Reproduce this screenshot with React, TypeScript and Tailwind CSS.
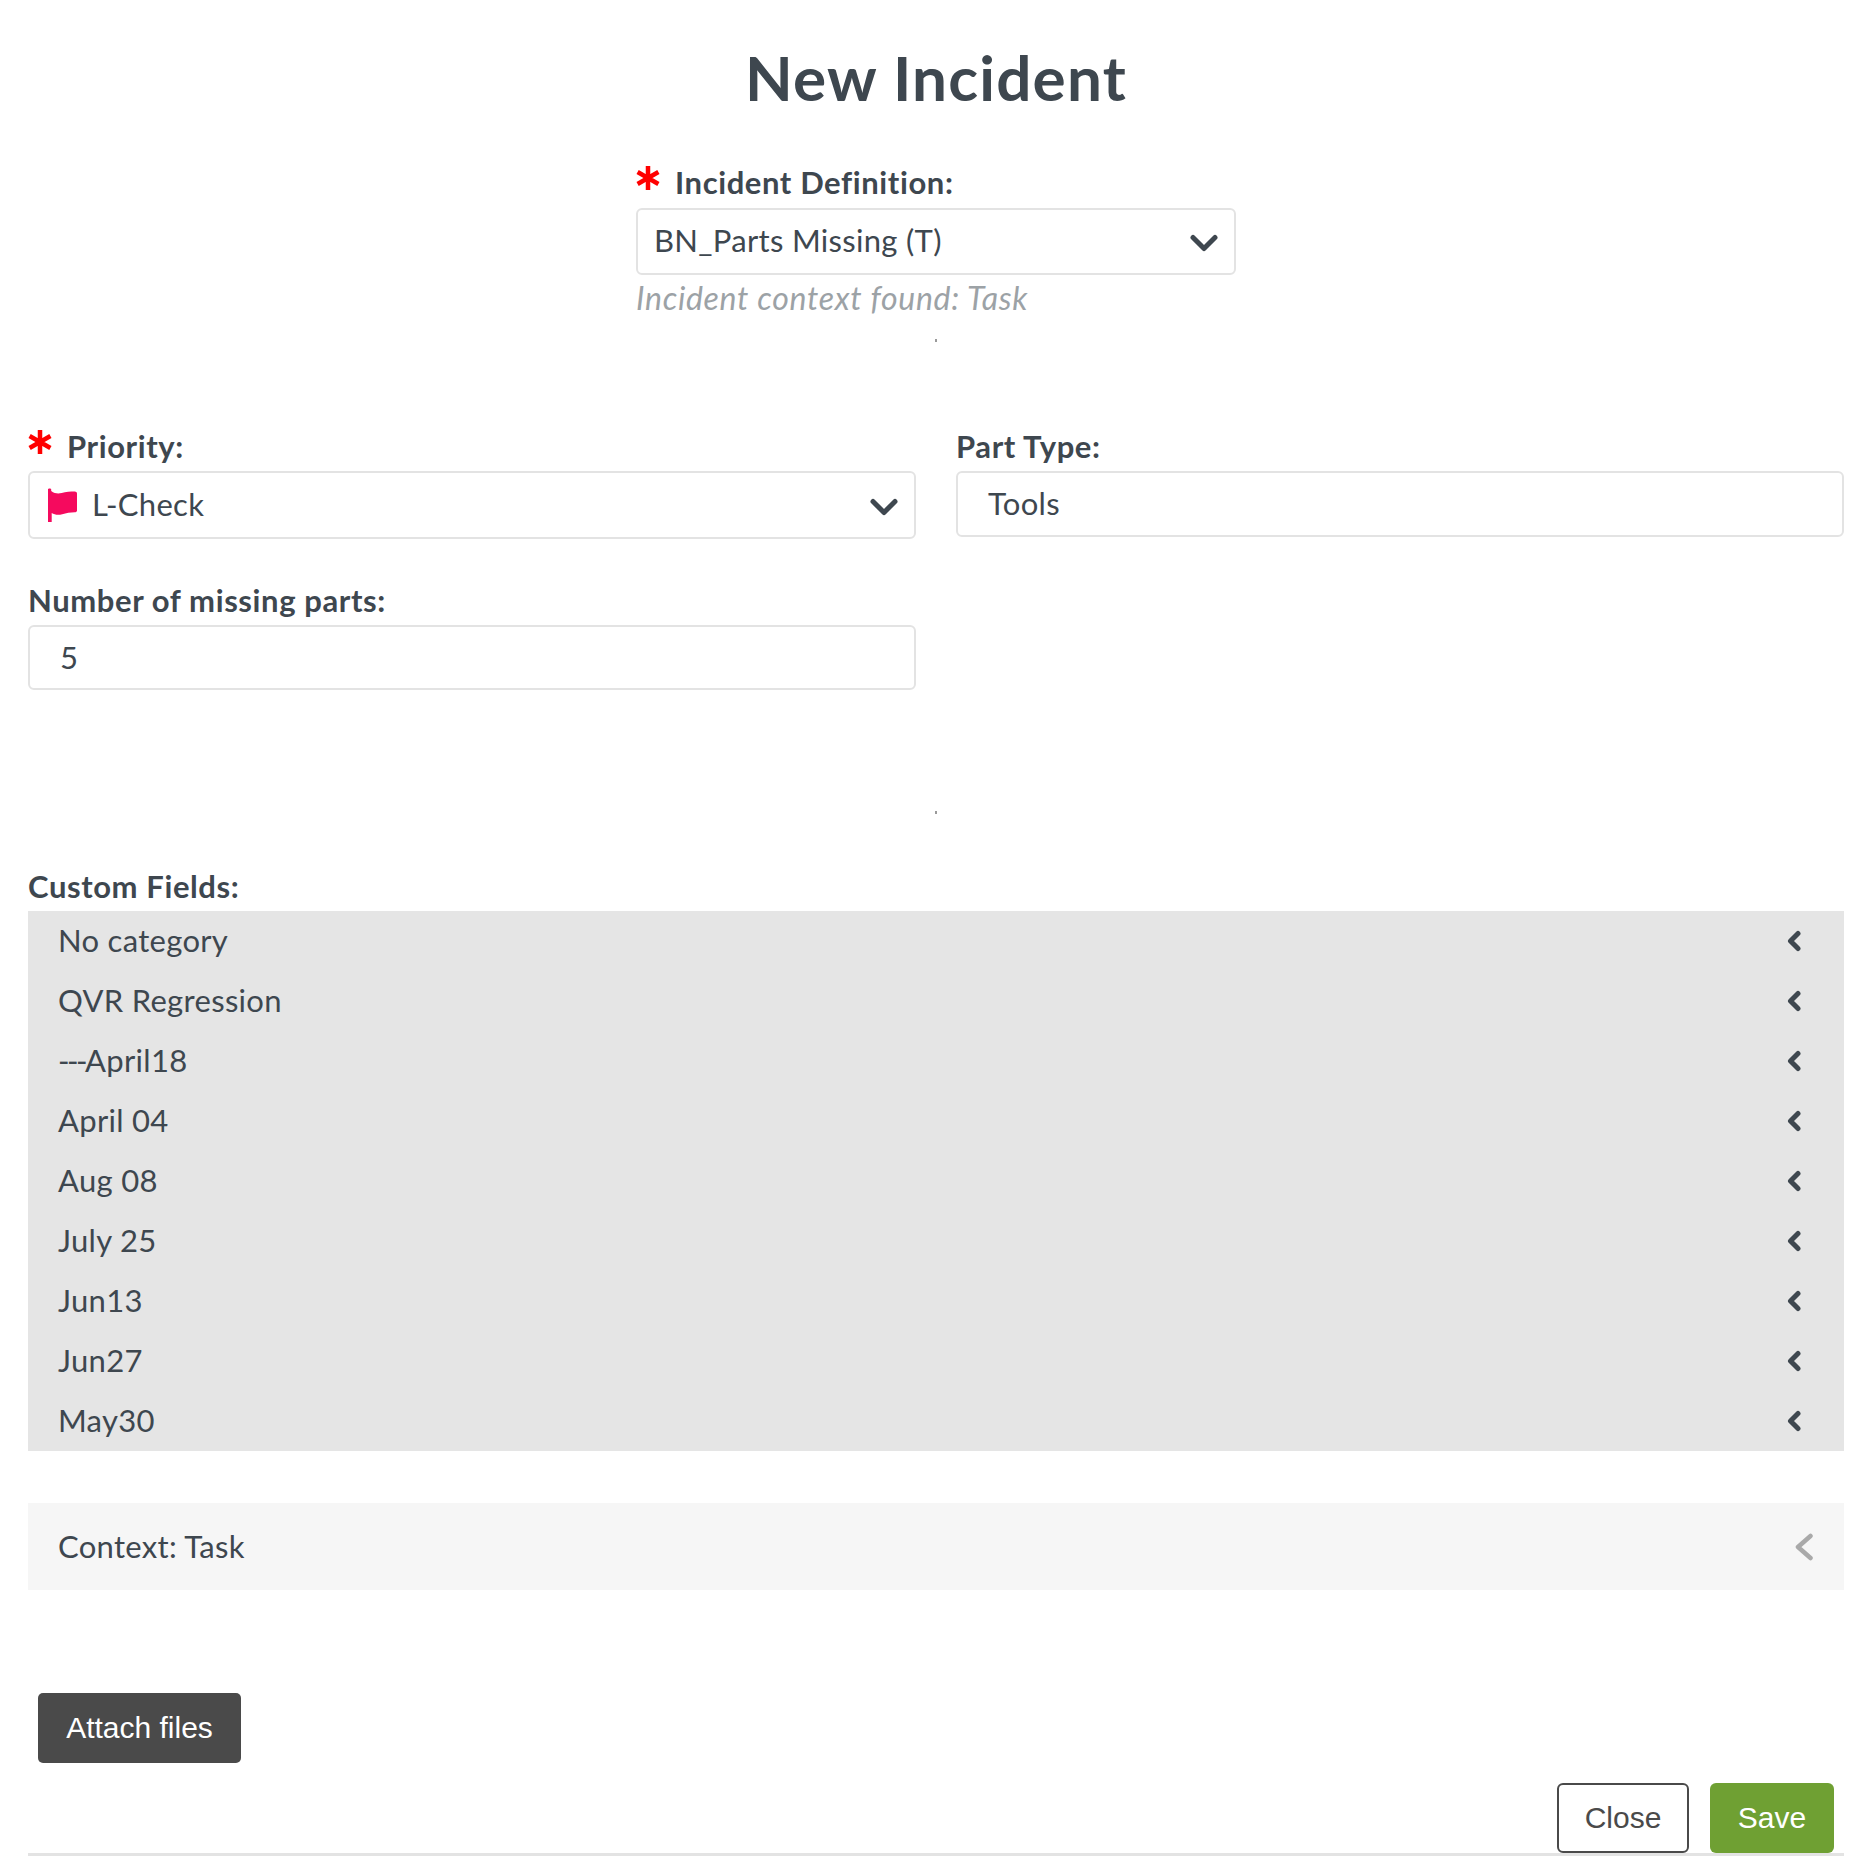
const categories = [
  'No category',
  'QVR Regression',
  '---April18',
  'April 04',
  'Aug 08',
  'July 25',
  'Jun13',
  'Jun27',
  'May30',
];

function Star({ className }: { className: string }) {
  return (
    <svg viewBox="0 0 24 24" className={className} fill="none" stroke="#ff0000" strokeWidth="4.5">
      <path d="M12 0v24M1.6 6l20.8 12M1.6 18L22.4 6" />
    </svg>
  );
}

function ChevronDown() {
  return (
    <svg viewBox="0 0 28 18" className="w-[28px] h-[18px] mt-[3px]" fill="none" stroke="#3e474f" strokeWidth="5" strokeLinecap="round" strokeLinejoin="round">
      <path d="M3 3.5l11 11 11-11" />
    </svg>
  );
}

function ChevronLeft({ light }: { light?: boolean }) {
  if (light) {
    return (
      <svg viewBox="0 0 20 28" className="w-[20px] h-[28px]" fill="none" stroke="#a9a9a9" strokeWidth="4.5" strokeLinecap="round" strokeLinejoin="round">
        <path d="M16.5 3L4 14l12.5 11" />
      </svg>
    );
  }
  return (
    <svg viewBox="0 0 16 22" className="w-[16px] h-[22px]" fill="none" stroke="#3e474f" strokeWidth="5" strokeLinecap="round" strokeLinejoin="round">
      <path d="M12 3.5L4.5 11l7.5 7.5" />
    </svg>
  );
}

function Flag() {
  return (
    <svg viewBox="0 0 32 34" className="w-[32px] h-[34px]">
      <path
        fill="#f50a5e"
        d="M1 1.5c0-1.4 3.2-1.4 3.2 0V3c3.5 2.6 7 3 10.5 2 4-1.1 9-1.5 13-1.5 1.4 0 2.3.8 2.3 2v17c0 1.2-.9 1.8-2.3 1.8-4.2 0-8.5.9-12.5 2-4 1-7.5.6-10.5-1.2V34H1z"
      />
    </svg>
  );
}

function Label({ text, required }: { text: string; required?: boolean }) {
  return (
    <div className="flex items-center h-[36px] text-[31px] tracking-[0.6px] font-bold text-[#3e474f]">
      {required && <Star className="w-[24px] h-[24px] mr-[15px] -mt-[8px]" />}
      <span>{text}</span>
    </div>
  );
}

export default function App() {
  return (
    <div className="w-[1856px] h-[1856px] overflow-hidden bg-white pl-[28px] pr-[12px] text-[#3e474f] font-['Lato','Liberation_Sans',sans-serif]">
      <h1 className="pt-[41px] h-[114px] leading-[72px] text-center text-[62px] tracking-[1.2px] font-bold">New Incident</h1>

      <div className="w-[600px] mx-auto mt-[50px]">
        <Label text="Incident Definition:" required />
        <div className="mt-[8px] h-[67px] flex items-center justify-between border-2 border-[#e3e3e3] rounded-[6px] pl-[16px] pr-[16px] text-[31px] tracking-[0.3px]">
          <span className="pb-[2px]">BN_Parts Missing (T)</span>
          <ChevronDown />
        </div>
        <div className="mt-[6px] leading-[34px] text-[32px] tracking-[0.7px] italic text-[#9ca2a6]">Incident context found: Task</div>
      </div>
      <div className="w-[2px] h-[3px] bg-[#9a9a9a] mx-auto mt-[24px]" />

      <div className="grid grid-cols-2 gap-x-[40px] mt-[86px]">
        <div>
          <Label text="Priority:" required />
          <div className="mt-[7px] h-[68px] flex items-center justify-between border-2 border-[#e3e3e3] rounded-[6px] pl-[17px] pr-[16px] text-[31px] tracking-[0.3px]">
            <div className="flex items-center gap-[13px]">
              <Flag />
              <span className="pb-[2px]">L-Check</span>
            </div>
            <ChevronDown />
          </div>
        </div>
        <div>
          <Label text="Part Type:" />
          <div className="mt-[7px] h-[66px] flex items-center border-2 border-[#e3e3e3] rounded-[6px] pl-[30px] pb-[2px] text-[31px] tracking-[0.3px]">
            Tools
          </div>
        </div>
        <div className="mt-[43px]">
          <Label text="Number of missing parts:" />
          <div className="mt-[7px] h-[65px] flex items-center border-2 border-[#e3e3e3] rounded-[6px] pl-[30px] pb-[1px] text-[31px]">
            5
          </div>
        </div>
      </div>
      <div className="w-[2px] h-[3px] bg-[#9a9a9a] mx-auto mt-[121px]" />

      <div className="mt-[54px]">
        <Label text="Custom Fields:" />
      </div>
      <div className="mt-[7px] bg-[#e5e5e5]">
        {categories.map((name) => (
          <div key={name} className="h-[60px] flex items-center justify-between pl-[30px] pr-[42px] text-[31px] tracking-[0.3px]">
            {name.startsWith('---') ? (
              <span className="pb-[2px]">
                <span className="tracking-[-2.5px]">---</span>
                {name.slice(3)}
              </span>
            ) : (
              <span className="pb-[2px]">{name}</span>
            )}
            <ChevronLeft />
          </div>
        ))}
      </div>

      <div className="mt-[52px] h-[87px] flex items-center justify-between bg-[#f6f6f6] pl-[30px] pr-[30px] text-[31px] tracking-[0.3px]">
        <span>Context: Task</span>
        <ChevronLeft light />
      </div>

      <button className="block mt-[103px] ml-[10px] w-[203px] h-[70px] pb-[2px] rounded-[5px] bg-[#4a4a4a] text-white text-[30px] font-['Liberation_Sans',sans-serif]">
        Attach files
      </button>

      <div className="mt-[20px] flex justify-end gap-[21px] pr-[10px] text-[30px] font-['Liberation_Sans',sans-serif]">
        <button className="w-[132px] h-[70px] pb-[2px] rounded-[6px] border-2 border-[#4a4a4a] bg-white text-[#4a4a4a]">Close</button>
        <button className="w-[124px] h-[70px] pb-[2px] rounded-[6px] bg-[#6fa033] text-white">Save</button>
      </div>
      <div className="h-[3px] bg-[#e3e3e3]" />
    </div>
  );
}
